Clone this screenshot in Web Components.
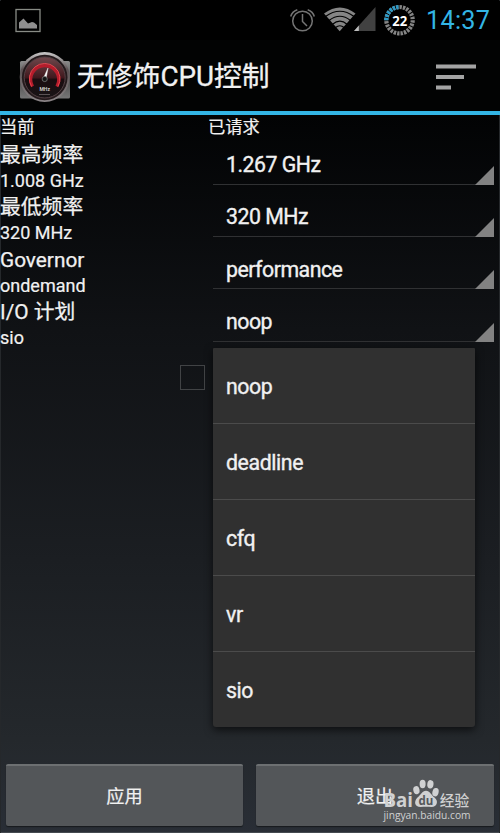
<!DOCTYPE html>
<html lang="zh-CN">
<head>
<meta charset="utf-8">
<title>无修饰CPU控制</title>
<style>
    body {
        margin: 0;
        background: #000;
        font-family: Roboto, "Noto Sans CJK SC", sans-serif;
        color: #f1f1f1;
    }
</style>
</head>
<body>
<cpu-app></cpu-app>

<script>
class StatusBar extends HTMLElement {
    constructor() {
        super();
        this.attachShadow({ mode: 'open' });
    }

    connectedCallback() {
        this.shadowRoot.innerHTML = `
            <style>
                :host {
                    display: flex;
                    justify-content: space-between;
                    height: 40px;
                    background: #000;
                    border-bottom: 1px solid #101010;
                    box-sizing: border-box;
                    flex: none;
                }
                svg { display: block; }
                .right { display: flex; }
                .clock {
                    width: 78px;
                    padding-left: 4px;
                    box-sizing: border-box;
                    font-size: 25.2px;
                    line-height: 40px;
                    letter-spacing: 0.3px;
                    color: #33b5e5;
                    white-space: nowrap;
                }
            </style>
            <svg width="60" height="39">
                <rect x="16" y="8.500" width="24" height="22" fill="none" stroke="#888b85" stroke-width="1.3"/>
                <path d="M19 27.500V21.500L23.500 17.500L28 22.500L32 21L34 21.500L37 24V27.500Z" fill="#8f8f8f"/>
            </svg>
            <div class="right">
                <svg width="138" height="39" viewBox="284 1 138 39">
                    <g fill="none" stroke="#747474" stroke-width="1.5">
                        <circle cx="302.5" cy="21" r="9.8"/>
                        <path d="M302.5 14V21.5L307 26M290.7 16.5Q292 11.5 297.3 9.7M307.7 9.7Q313 11.5 314.3 16.5"/>
                    </g>
                    <path d="M324 13.5Q340 1.500 355.500 13.500L339.700 31.200Z" fill="#858585"/>
                    <g fill="none" stroke="#000" stroke-width="1.200">
                        <path d="M325.500 16.500Q340 6 354 16.500M329 20.500Q340 12 350.500 20.500M332.500 24.200Q340 18 347 24.200M335.500 27.500Q340 24 344 27.500"/>
                    </g>
                    <path d="M354 31L375.500 7V31Z" fill="#414141"/>
                    <path d="M354 31L358.800 25.500V31Z" fill="#bdbdbd"/>
                    <circle cx="399.500" cy="20.200" r="13.200" fill="none" stroke="#858585" stroke-width="4.200" pathLength="96" stroke-dasharray="2.800 1.200"/>
                    <circle cx="399.500" cy="20.200" r="13.200" fill="none" stroke="#2d9bc8" stroke-width="4.200" pathLength="96" stroke-dasharray="2.800 1.200 2.800 1.200 2.800 1.200 2.800 1.200 2.800 1.200 2.800 73.200" transform="rotate(180 399.500 20.200)"/>
                    <text x="399.800" y="25.700" text-anchor="middle" font-family="Open Sans, sans-serif" font-size="14" font-weight="700" fill="#fff" textLength="15" lengthAdjust="spacingAndGlyphs">22</text>
                </svg>
                <div class="clock"><slot></slot></div>
            </div>
        `;
    }
}

class ActionBar extends HTMLElement {
    constructor() {
        super();
        this.attachShadow({ mode: 'open' });
    }

    connectedCallback() {
        this.shadowRoot.innerHTML = `
            <style>
                :host {
                    display: flex;
                    align-items: center;
                    height: 75px;
                    padding: 0 24px 0 18px;
                    box-sizing: border-box;
                    border-bottom: 4px solid #33b5e5;
                    background: #020303;
                    flex: none;
                }
                .title {
                    flex: 1;
                    margin-left: 5px;
                    padding-top: 3px;
                    font-size: 27.8px;
                    line-height: 40px;
                    white-space: nowrap;
                    -webkit-text-stroke: 0.3px;
                }
                svg { display: block; }
                .menu { margin-top: 2px; }
            </style>
            <svg width="54" height="54" viewBox="18 49 54 54">
                <defs>
                    <linearGradient id="plate" x1="0" y1="0" x2="0" y2="1">
                        <stop offset="0" stop-color="#8a8a8a"/>
                        <stop offset="0.5" stop-color="#4c4c4c"/>
                        <stop offset="1" stop-color="#777"/>
                    </linearGradient>
                    <linearGradient id="rim" x1="0" y1="0" x2="0" y2="1">
                        <stop offset="0" stop-color="#c8c8c8"/>
                        <stop offset="0.35" stop-color="#5a5052"/>
                        <stop offset="1" stop-color="#8b8587"/>
                    </linearGradient>
                    <linearGradient id="face" x1="0" y1="0" x2="0" y2="1">
                        <stop offset="0" stop-color="#70484c"/>
                        <stop offset="0.5" stop-color="#40191e"/>
                        <stop offset="0.55" stop-color="#1b0d10"/>
                        <stop offset="1" stop-color="#181416"/>
                    </linearGradient>
                </defs>
                <rect x="20" y="61" width="50" height="37.500" rx="1.500" fill="url(#plate)"/>
                <circle cx="44.700" cy="77" r="25" fill="url(#rim)"/>
                <circle cx="44.700" cy="77.500" r="22.800" fill="#241a1c"/>
                <circle cx="44.700" cy="77.500" r="20.500" fill="url(#face)" stroke="#544145" stroke-width="1"/>
                <path d="M32.500 86.500A14 14 0 1 1 56.900 86.500" fill="none" stroke="#b51c2b" stroke-width="3.200"/>
                <path d="M31.500 86.500A15.300 15.300 0 1 1 57.900 86.500" fill="none" stroke="#f24850" stroke-width="0.900"/>
                <path d="M43.500 78L48 68L46 79Z" fill="#fff" stroke="#eee" stroke-width="0.500"/>
                <circle cx="44.700" cy="79" r="2.600" fill="#161616" stroke="#777" stroke-width="0.800"/>
                <text x="44.700" y="90.500" text-anchor="middle" font-size="5" font-weight="700" fill="#ccc">MHz</text>
                <path d="M39 94.500H50" stroke="#5b5355" stroke-width="1"/>
            </svg>
            <div class="title"><slot></slot></div>
            <svg class="menu" width="40" height="26" fill="#a4a4a4">
                <rect x="0" y="0.500" width="40" height="4"/>
                <rect x="0" y="11" width="28" height="4"/>
                <rect x="0" y="21.500" width="15" height="4"/>
            </svg>
        `;
    }
}

class SettingRow extends HTMLElement {
    constructor() {
        super();
        this.attachShadow({ mode: 'open' });
    }

    connectedCallback() {
        this.shadowRoot.innerHTML = `
            <style>
                :host {
                    display: grid;
                    grid-template-columns: 213px 281px;
                    height: 52.4px;
                    white-space: nowrap;
                }
                .labels { padding-top: 1px; }
                .label {
                    font-size: 20.8px;
                    line-height: 26px;
                    -webkit-text-stroke: 0.25px;
                }
                .value {
                    font-size: 18px;
                    line-height: 26px;
                    -webkit-text-stroke: 0.2px;
                }
                .spinner {
                    display: flex;
                    justify-content: space-between;
                    align-items: flex-end;
                    height: 43.500px;
                    padding-left: 13px;
                    box-sizing: border-box;
                    border-bottom: 1.500px solid #303133;
                    font-size: 21.3px;
                    letter-spacing: -0.5px;
                    -webkit-text-stroke: 0.35px;
                }
                .spinner span {
                    align-self: center;
                    line-height: 40px;
                    padding-top: 5px;
                }
                .spinner svg {
                    display: block;
                    margin-bottom: -1px;
                }
            </style>
            <div class="labels">
                <div class="label">${this.getAttribute('label')}</div>
                <div class="value">${this.getAttribute('current')}</div>
            </div>
            <div class="spinner">
                <span><slot></slot></span>
                <svg width="19" height="20"><path d="M0 20L19 1V20Z" fill="#828282"/></svg>
            </div>
        `;
    }
}

class DropdownItem extends HTMLElement {
    constructor() {
        super();
        this.attachShadow({ mode: 'open' });
    }

    connectedCallback() {
        this.shadowRoot.innerHTML = `
            <style>
                :host {
                    display: block;
                    height: 76px;
                    padding-left: 13px;
                    box-sizing: border-box;
                    border-bottom: 1px solid #4b4b4b;
                    font-size: 21.3px;
                    line-height: 77px;
                    letter-spacing: -0.4px;
                    -webkit-text-stroke: 0.35px;
                }
                :host(:last-child) { border-bottom: 0; }
            </style>
            <slot></slot>
        `;
    }
}

class DropdownMenu extends HTMLElement {
    constructor() {
        super();
        this.attachShadow({ mode: 'open' });
    }

    connectedCallback() {
        this.shadowRoot.innerHTML = `
            <style>
                :host {
                    display: block;
                    height: 379px;
                    overflow: hidden;
                    background: #303030;
                    border-radius: 1px 1px 3px 3px;
                    box-shadow: 0 3px 8px rgba(0, 0, 0, 0.65);
                }
            </style>
            <slot></slot>
        `;
    }
}

class HoloButton extends HTMLElement {
    constructor() {
        super();
        this.attachShadow({ mode: 'open' });
    }

    connectedCallback() {
        this.shadowRoot.innerHTML = `
            <style>
                :host { display: block; }
                button {
                    display: block;
                    width: 100%;
                    height: 62px;
                    padding: 0 0 2px;
                    border: 0;
                    border-top: 2px solid #6d7072;
                    border-radius: 2px;
                    background: #535659;
                    box-shadow: 0 1px 1px #171a1d;
                    color: inherit;
                    font: inherit;
                    font-size: 18.2px;
                    -webkit-text-stroke: 0.2px;
                }
            </style>
            <button><slot></slot></button>
        `;
    }
}

class SiteMark extends HTMLElement {
    constructor() {
        super();
        this.attachShadow({ mode: 'open' });
    }

    connectedCallback() {
        this.shadowRoot.innerHTML = `
            <style>
                :host { display: block; }
                svg { display: block; }
            </style>
            <svg width="96" height="48" viewBox="380 776 96 48" fill="#d0d1d2">
                <text x="383.500" y="806.500" font-family="Open Sans, sans-serif" font-size="19.500" font-weight="700" textLength="29.500" lengthAdjust="spacingAndGlyphs">Bai</text>
                <ellipse cx="416.400" cy="790.200" rx="3.100" ry="4.100" transform="rotate(-12 416.400 790.200)"/>
                <ellipse cx="422.600" cy="784" rx="3" ry="4.200"/>
                <ellipse cx="430.400" cy="784.300" rx="3.100" ry="4.200" transform="rotate(8 430.400 784.300)"/>
                <ellipse cx="435.500" cy="792.200" rx="3.100" ry="4.200" transform="rotate(14 435.500 792.200)"/>
                <path d="M426 790.800C430 790.800 431 795 434.500 797.500C439 801 437 807 431.500 807C428 806.500 424 806.500 420.500 807C414.500 807 413.500 801.500 417.500 797.500C421 795 422 790.800 426 790.800Z"/>
                <text x="426" y="804.700" text-anchor="middle" font-family="Open Sans, sans-serif" font-size="11.500" font-weight="700" fill="#54575a">du</text>
                <text x="439.800" y="805.700" font-family="Noto Sans CJK SC, sans-serif" font-size="15" font-weight="500" textLength="29.500" lengthAdjust="spacingAndGlyphs">经验</text>
                <text x="383.500" y="818.800" font-family="Open Sans, sans-serif" font-size="11" textLength="87" lengthAdjust="spacingAndGlyphs">jingyan.baidu.com</text>
            </svg>
        `;
    }
}

class CpuApp extends HTMLElement {
    constructor() {
        super();
        this.attachShadow({ mode: 'open' });
    }

    connectedCallback() {
        this.shadowRoot.innerHTML = `
            <style>
                :host {
                    display: flex;
                    flex-direction: column;
                    position: relative;
                    width: 500px;
                    height: 833px;
                    overflow: hidden;
                    background: linear-gradient(#000 0, #020304 115px, #101215 330px, #1b1e22 560px, #24282c 740px, #292e36 833px);
                    box-shadow: inset 1px 0 #25282b, inset -1px 0 #25282b, inset 0 -1px #454a50;
                }
                status-bar { margin-top: 1px; }
                action-bar { margin-top: -1px; }
                .head {
                    display: grid;
                    grid-template-columns: 208px 1fr;
                    height: 26px;
                    font-size: 17.3px;
                    line-height: 25px;
                    -webkit-text-stroke: 0.2px;
                }
                .check {
                    width: 23px;
                    height: 23px;
                    margin: 14px 0 0 180px;
                    border: 1.500px solid #414345;
                }
                .buttons {
                    display: grid;
                    grid-template-columns: 237px 238px;
                    gap: 13px;
                    margin-top: auto;
                    padding: 0 6px 7px;
                }
                dropdown-menu {
                    position: absolute;
                    left: 213px;
                    top: 348px;
                    width: 262px;
                }
                site-mark {
                    position: absolute;
                    left: 380px;
                    top: 776px;
                }
            </style>
            <status-bar>14:37</status-bar>
            <action-bar>无修饰CPU控制</action-bar>
            <div class="head"><span>当前</span><span>已请求</span></div>
            <setting-row label="最高频率" current="1.008 GHz">1.267 GHz</setting-row>
            <setting-row label="最低频率" current="320 MHz">320 MHz</setting-row>
            <setting-row label="Governor" current="ondemand">performance</setting-row>
            <setting-row label="I/O 计划" current="sio">noop</setting-row>
            <div class="check"></div>
            <div class="buttons">
                <holo-button>应用</holo-button>
                <holo-button>退出</holo-button>
            </div>
            <dropdown-menu>
                <dropdown-item>noop</dropdown-item>
                <dropdown-item>deadline</dropdown-item>
                <dropdown-item>cfq</dropdown-item>
                <dropdown-item>vr</dropdown-item>
                <dropdown-item>sio</dropdown-item>
            </dropdown-menu>
            <site-mark></site-mark>
        `;
    }
}

customElements.define('status-bar', StatusBar);
customElements.define('action-bar', ActionBar);
customElements.define('setting-row', SettingRow);
customElements.define('dropdown-item', DropdownItem);
customElements.define('dropdown-menu', DropdownMenu);
customElements.define('holo-button', HoloButton);
customElements.define('site-mark', SiteMark);
customElements.define('cpu-app', CpuApp);
</script>
</body>
</html>
